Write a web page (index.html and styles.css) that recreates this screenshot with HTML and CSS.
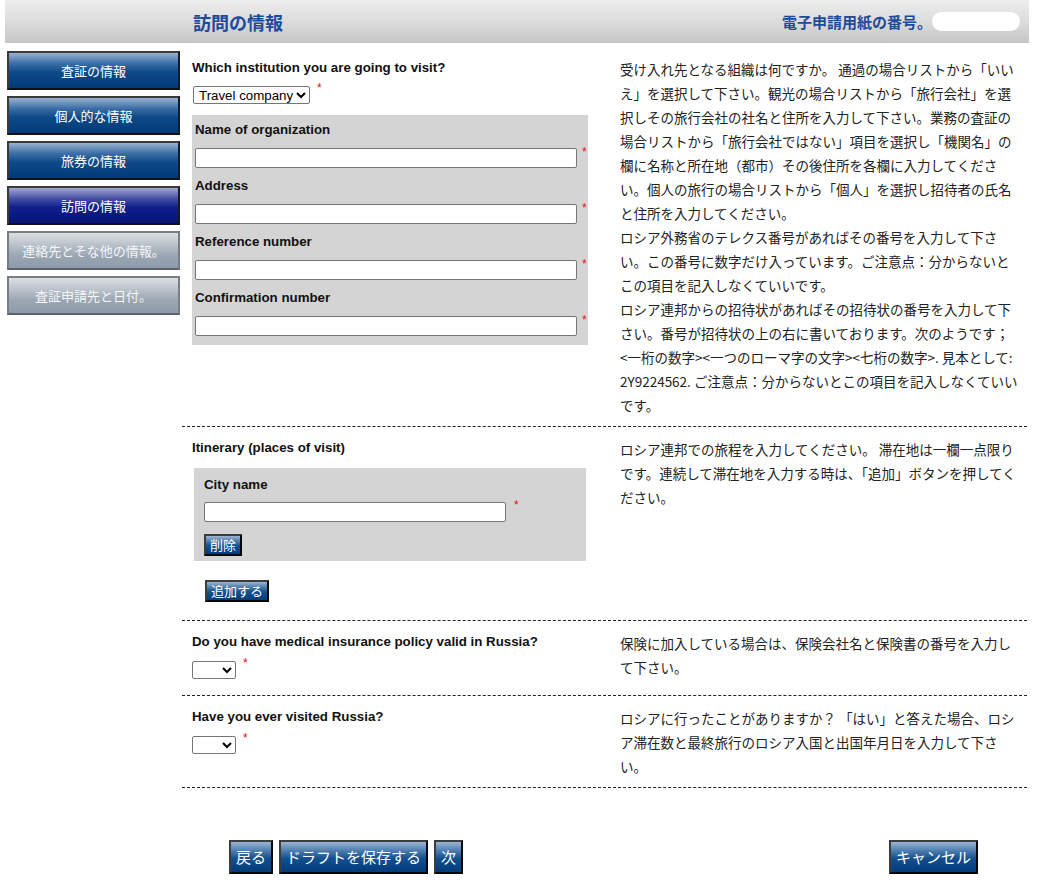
FILE: index.html
```html
<!DOCTYPE html>
<html lang="ja">
<head>
<meta charset="utf-8">
<title>訪問の情報</title>
<link rel="stylesheet" href="styles.css">
</head>
<body>
<div class="page">
  <header class="topbar">
    <h1 class="title">訪問の情報</h1>
    <div class="formno"><span class="formno-label">電子申請用紙の番号。</span><span class="formno-box"></span></div>
  </header>
  <div class="layout">
    <nav class="sidebar">
      <a class="nav-btn">査証の情報</a>
      <a class="nav-btn">個人的な情報</a>
      <a class="nav-btn">旅券の情報</a>
      <a class="nav-btn nav-active">訪問の情報</a>
      <a class="nav-btn nav-off">連絡先とそな他の情報。</a>
      <a class="nav-btn nav-off">査証申請先と日付。</a>
    </nav>
    <main class="main">
      <section class="sec">
        <div class="col-left">
          <div class="q">Which institution you are going to visit?</div>
          <div class="ctl ctl-first"><select class="sel sel-wide"><option>Travel company</option></select><span class="req">*</span></div>
          <div class="graybox">
            <div class="field">
              <div class="flabel">Name of organization</div>
              <div class="frow"><input class="txt" type="text"><span class="req">*</span></div>
            </div>
            <div class="field">
              <div class="flabel">Address</div>
              <div class="frow"><input class="txt" type="text"><span class="req">*</span></div>
            </div>
            <div class="field">
              <div class="flabel">Reference number</div>
              <div class="frow"><input class="txt" type="text"><span class="req">*</span></div>
            </div>
            <div class="field">
              <div class="flabel">Confirmation number</div>
              <div class="frow"><input class="txt" type="text"><span class="req">*</span></div>
            </div>
          </div>
        </div>
        <div class="col-right">
          <p>受け入れ先となる組織は何ですか。 通過の場合リストから「いいえ」を選択して下さい。観光の場合リストから「旅行会社」を選択しその旅行会社の社名と住所を入力して下さい。業務の査証の場合リストから「旅行会社ではない」項目を選択し「機関名」の欄に名称と所在地（都市）その後住所を各欄に入力してください。個人の旅行の場合リストから「個人」を選択し招待者の氏名と住所を入力してください。</p>
          <p>ロシア外務省のテレクス番号があればその番号を入力して下さい。この番号に数字だけ入っています。ご注意点：分からないとこの項目を記入しなくていいです。</p>
          <p>ロシア連邦からの招待状があればその招待状の番号を入力して下さい。番号が招待状の上の右に書いております。次のようです；<span class="nowrap">&lt;一桁の数字&gt;&lt;一つのローマ字の文字&gt;&lt;七桁の数字&gt;. 見本として:</span> 2Y9224562. ご注意点：分からないとこの項目を記入しなくていいです。</p>
        </div>
      </section>

      <section class="sec">
        <div class="col-left">
          <div class="q">Itinerary (places of visit)</div>
          <div class="graybox graybox-city">
            <div class="flabel">City name</div>
            <div class="frow frow-city"><input class="txt txt-city" type="text"><span class="req">*</span></div>
            <button class="btn btn-small btn-del" type="button">削除</button>
          </div>
          <button class="btn btn-small btn-add" type="button">追加する</button>
        </div>
        <div class="col-right">
          <p>ロシア連邦での旅程を入力してください。 滞在地は一欄一点限りです。連続して滞在地を入力する時は、「追加」ボタンを押してください。</p>
        </div>
      </section>

      <section class="sec">
        <div class="col-left">
          <div class="q">Do you have medical insurance policy valid in Russia?</div>
          <div class="ctl ctl-yn"><select class="sel sel-yn"><option></option></select><span class="req">*</span></div>
        </div>
        <div class="col-right">
          <p>保険に加入している場合は、保険会社名と保険書の番号を入力して下さい。</p>
        </div>
      </section>

      <section class="sec">
        <div class="col-left">
          <div class="q">Have you ever visited Russia?</div>
          <div class="ctl ctl-yn"><select class="sel sel-yn"><option></option></select><span class="req">*</span></div>
        </div>
        <div class="col-right">
          <p>ロシアに行ったことがありますか？ 「はい」と答えた場合、ロシア滞在数と最終旅行のロシア入国と出国年月日を入力して下さい。</p>
        </div>
      </section>

      <div class="footer">
        <div class="footer-left">
          <button class="btn btn-big" type="button">戻る</button>
          <button class="btn btn-big" type="button">ドラフトを保存する</button>
          <button class="btn btn-big" type="button">次</button>
        </div>
        <button class="btn btn-big" type="button">キャンセル</button>
      </div>
    </main>
  </div>
</div>
</body>
</html>
```
FILE: styles.css
```css
html, body {
  margin: 0;
  padding: 0;
  background: #ffffff;
}

body {
  font-family: "Liberation Sans", Arial, "Noto Sans CJK JP", sans-serif;
  color: #111111;
}

.page {
  width: 1042px;
}

/* Header */
.topbar {
  margin-left: 5px;
  width: 1024px;
  height: 43px;
  box-sizing: border-box;
  padding: 0 9px 0 188px;
  display: flex;
  align-items: center;
  justify-content: space-between;
  background: linear-gradient(to bottom, #ededed 0%, #dcdcdc 50%, #c5c5c5 100%);
}

.title {
  margin: 0;
  font-family: "Noto Sans CJK JP", sans-serif;
  font-size: 18px;
  font-weight: bold;
  color: #1d4b9a;
  line-height: 24px;
}

.formno {
  display: flex;
  align-items: center;
}

.formno-label {
  font-family: "Noto Sans CJK JP", sans-serif;
  font-size: 15px;
  font-weight: bold;
  color: #1d4b9a;
}

.formno-box {
  display: block;
  width: 88px;
  height: 19px;
  border-radius: 10px;
  background: #ffffff;
}

/* Layout */
.layout {
  display: flex;
  align-items: flex-start;
}

.sidebar {
  width: 182px;
  box-sizing: border-box;
  padding: 8px 0 0 7px;
  display: flex;
  flex-direction: column;
  gap: 6px;
}

.nav-btn {
  display: flex;
  align-items: center;
  justify-content: center;
  width: 173px;
  height: 39px;
  box-sizing: border-box;
  border: 2px solid #3a3a3a;
  border-bottom-color: #111111;
  border-right-color: #1a1a1a;
  background: linear-gradient(to bottom, #9ab3d0 0%, #3b6ea6 30%, #0f4a88 55%, #003a78 100%);
  color: #ffffff;
  font-family: "Noto Sans CJK JP", sans-serif;
  font-size: 13px;
  cursor: pointer;
}

.nav-active {
  background: linear-gradient(to bottom, #a4a8d4 0%, #4650a6 30%, #101f8a 55%, #051478 100%);
}

.nav-off {
  border-color: #7a7e84;
  border-bottom-color: #5e6268;
  background: linear-gradient(to bottom, #dde0e4 0%, #b8c0c8 35%, #9aa6b2 65%, #8e9bab 100%);
  color: #f4f6f8;
}

/* Main */
.main {
  width: 845px;
  padding-top: 4px;
}

.sec {
  display: grid;
  grid-template-columns: 428px 400px;
  padding: 10px 0 9px 10px;
  border-bottom: 1px dashed #222222;
}

.col-left {
  display: flex;
  flex-direction: column;
  align-items: flex-start;
}

.q {
  margin-top: 3px;
  font-size: 13.3px;
  font-weight: bold;
  line-height: 16px;
  color: #111111;
}

.ctl {
  display: flex;
  align-items: flex-start;
}

.ctl-first {
  margin-top: 10px;
  margin-left: 1px;
}

.ctl-yn {
  margin-top: 11px;
  margin-bottom: 7px;
}

.sel {
  height: 18px;
  box-sizing: border-box;
  border: 1px solid #767676;
  border-radius: 2px;
  background: #ffffff;
  font-family: "Liberation Sans", Arial, sans-serif;
  font-size: 13.3px;
  color: #000000;
  padding: 0 0 0 1px;
}

.sel-wide {
  width: 117px;
}

.sel-yn {
  width: 44px;
}

.req {
  color: #e01010;
  font-size: 12px;
  line-height: 10px;
  margin-left: 7px;
  margin-top: -3px;
}

.graybox {
  margin-top: 11px;
  width: 396px;
  box-sizing: border-box;
  padding: 7px 0 9px 3px;
  background: #d4d4d4;
}

.field + .field {
  margin-top: 10px;
}

.flabel {
  font-size: 13.3px;
  font-weight: bold;
  line-height: 16px;
  color: #111111;
}

.frow {
  display: flex;
  align-items: flex-start;
  margin-top: 10px;
}

.frow .req {
  margin-left: 5px;
  margin-top: -1px;
}

.txt {
  width: 382px;
  height: 20px;
  box-sizing: border-box;
  border: 1px solid #767676;
  border-radius: 2px;
  background: #ffffff;
  padding: 0 3px;
  margin: 0;
  font-size: 13px;
}

.graybox-city {
  margin-top: 12px;
  margin-left: 2px;
  width: 392px;
  padding: 9px 0 5px 10px;
}

.frow-city {
  margin-top: 9px;
}

.frow-city .req {
  margin-left: 8px;
  margin-top: -2px;
}

.txt-city {
  width: 302px;
}

/* Buttons */
.btn {
  box-sizing: border-box;
  margin: 0;
  border: 2px solid #3c3c3c;
  border-right-color: #080808;
  border-bottom-color: #080808;
  background: linear-gradient(to bottom, #9cb6d2 0%, #4f7fb2 28%, #14508e 55%, #003c7c 100%);
  color: #ffffff;
  font-family: "Noto Sans CJK JP", sans-serif;
  cursor: pointer;
  display: inline-flex;
  align-items: center;
  justify-content: center;
}

.btn-small {
  height: 22px;
  padding: 0 4px;
  font-size: 13px;
  line-height: 16px;
}

.btn-del {
  margin-top: 12px;
}

.btn-add {
  margin-top: 19px;
  margin-left: 13px;
  margin-bottom: 9px;
}

.btn-big {
  height: 34px;
  padding: 0 5px;
  font-size: 15px;
  line-height: 20px;
}

/* Right column text */
.col-right {
  font-family: "Noto Sans CJK JP", sans-serif;
  font-size: 13.5px;
  line-height: 24px;
  color: #222222;
}

.col-right p {
  margin: 0;
}

.nowrap {
  white-space: nowrap;
}

/* Footer */
.footer {
  margin-top: 52px;
  padding: 0 49px 0 47px;
  display: flex;
  justify-content: space-between;
  align-items: flex-start;
}

.footer-left {
  display: flex;
  gap: 6px;
}
```
